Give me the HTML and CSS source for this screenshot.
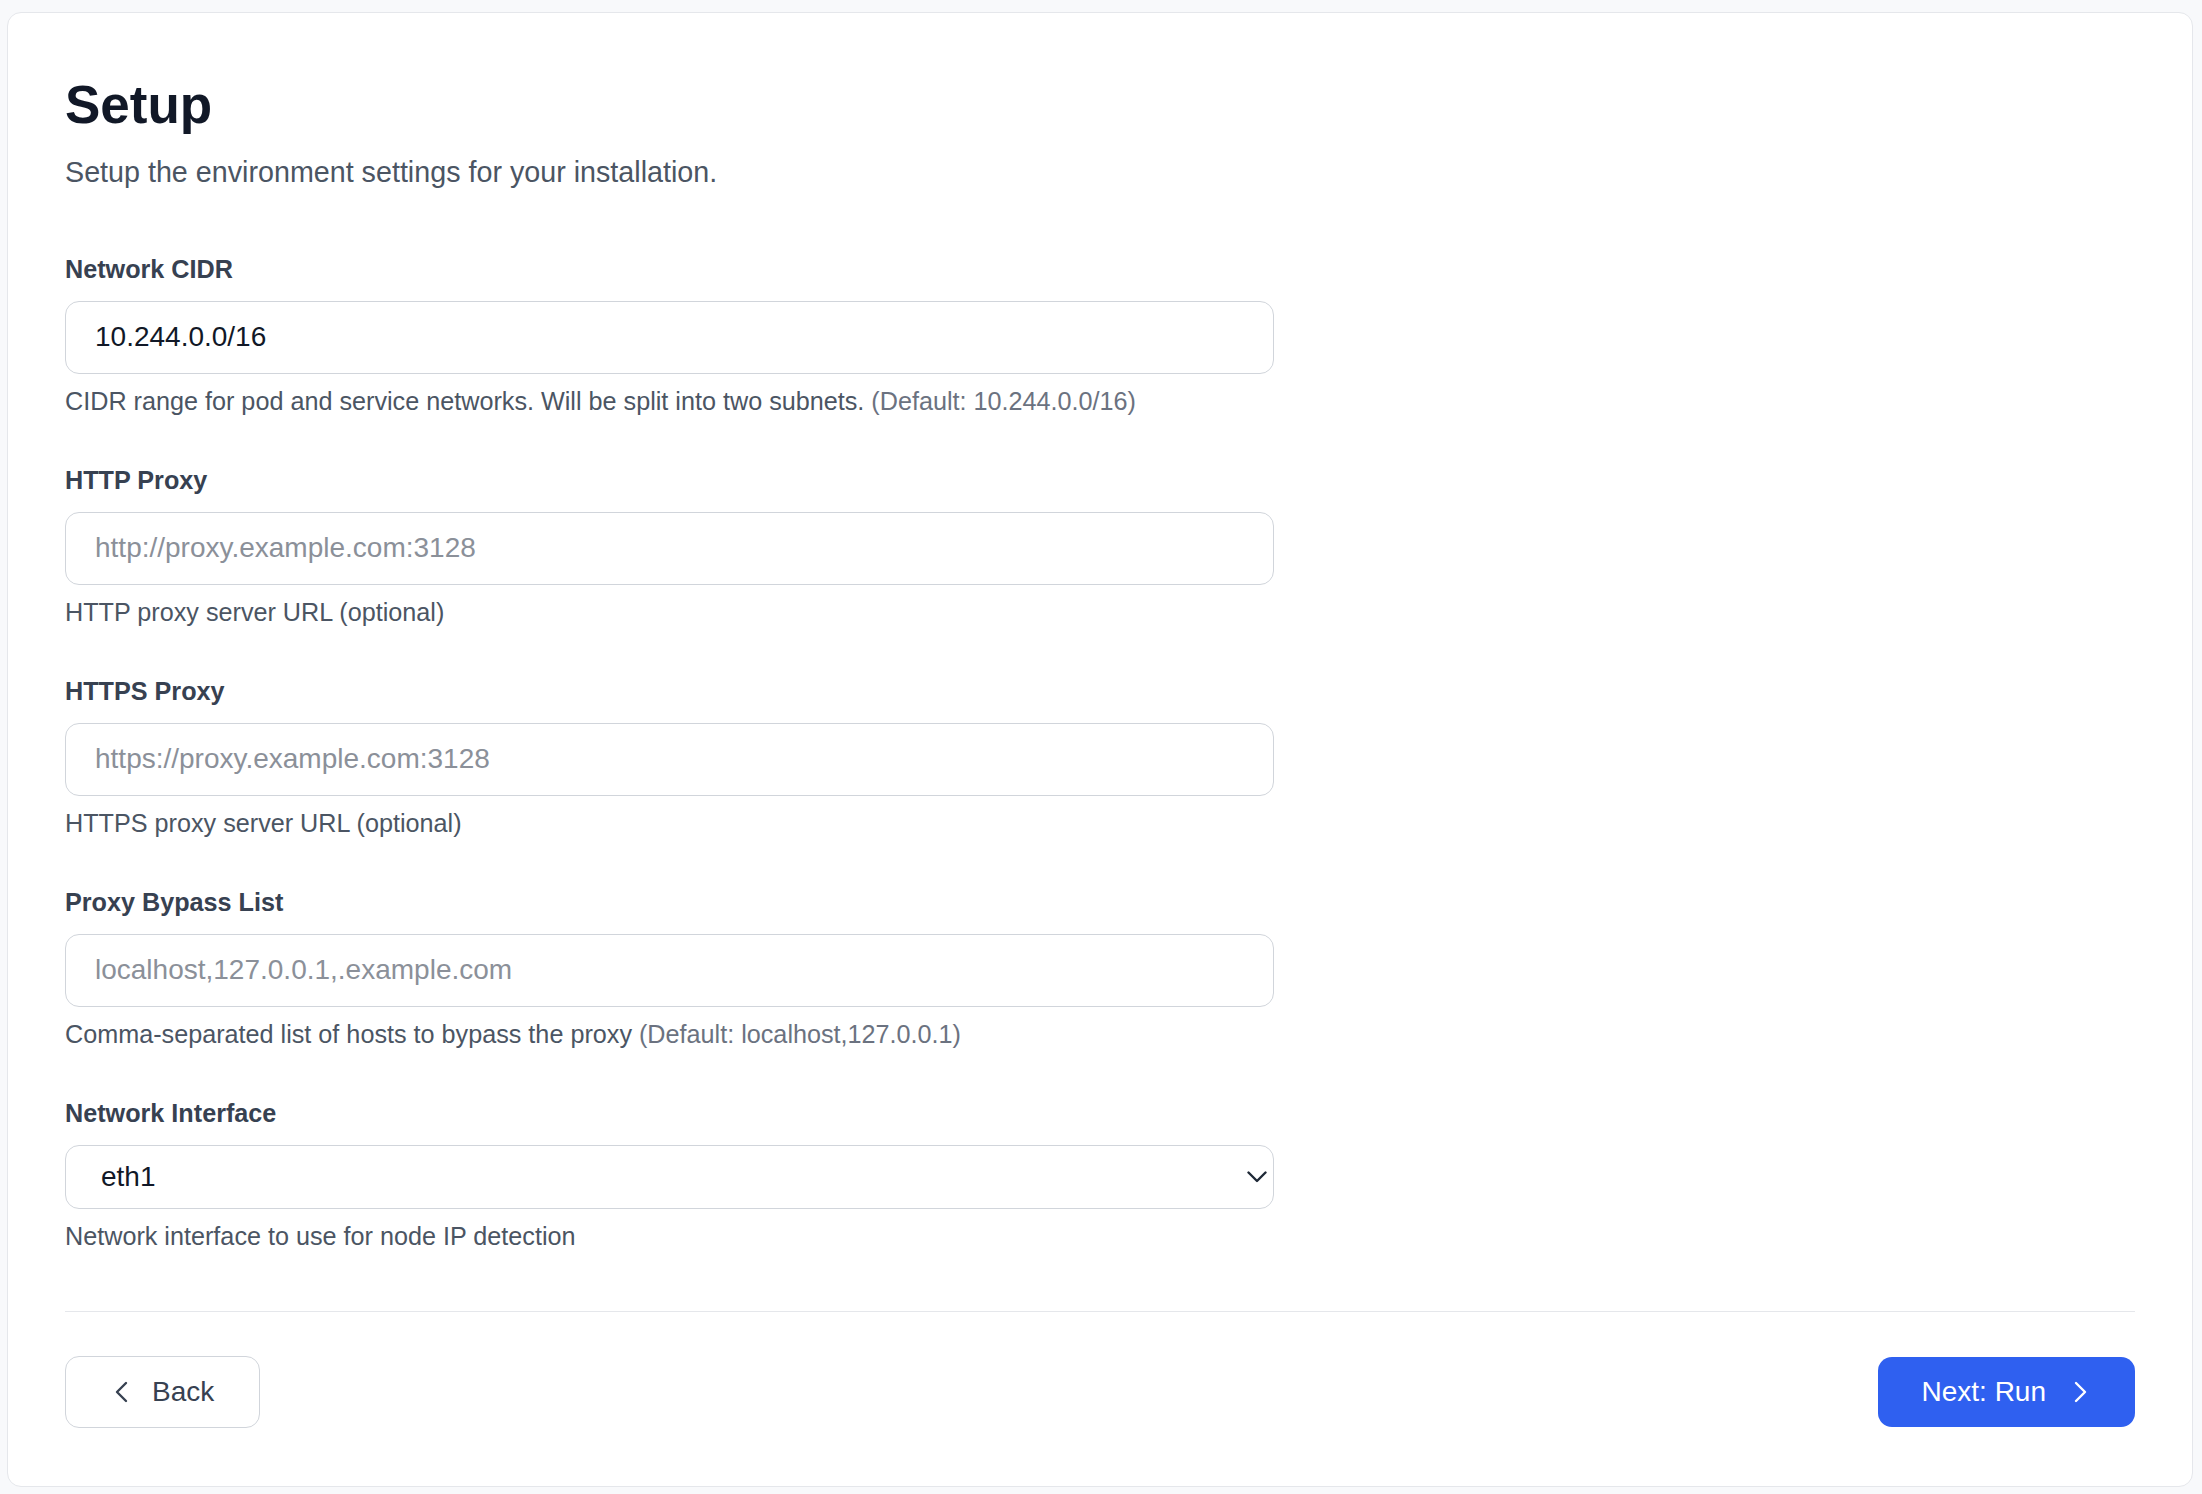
FILE: index.html
```html
<!DOCTYPE html>
<html lang="en">
<head>
<meta charset="utf-8">
<title>Setup</title>
<link rel="stylesheet" href="styles.css">
</head>
<body>
<main class="card">
  <h1 class="title">Setup</h1>
  <p class="subtitle">Setup the environment settings for your installation.</p>

  <form class="fields">
    <div class="field">
      <label class="label" for="cidr">Network CIDR</label>
      <input class="input" id="cidr" type="text" value="10.244.0.0/16">
      <p class="help">CIDR range for pod and service networks. Will be split into two subnets. <span class="muted">(Default: 10.244.0.0/16)</span></p>
    </div>

    <div class="field">
      <label class="label" for="http">HTTP Proxy</label>
      <input class="input" id="http" type="text" placeholder="http://proxy.example.com:3128">
      <p class="help">HTTP proxy server URL (optional)</p>
    </div>

    <div class="field">
      <label class="label" for="https">HTTPS Proxy</label>
      <input class="input" id="https" type="text" placeholder="https://proxy.example.com:3128">
      <p class="help">HTTPS proxy server URL (optional)</p>
    </div>

    <div class="field">
      <label class="label" for="bypass">Proxy Bypass List</label>
      <input class="input" id="bypass" type="text" placeholder="localhost,127.0.0.1,.example.com">
      <p class="help">Comma-separated list of hosts to bypass the proxy <span class="muted">(Default: localhost,127.0.0.1)</span></p>
    </div>

    <div class="field">
      <label class="label" for="iface">Network Interface</label>
      <div class="select-wrap">
        <select class="select" id="iface">
          <option>eth1</option>
        </select>
        <svg class="select-arrow" viewBox="0 0 20 12" width="20" height="12" aria-hidden="true">
          <polyline points="1.5,1.5 10,10 18.5,1.5" fill="none" stroke="#1f2937" stroke-width="2.4" stroke-linecap="round" stroke-linejoin="round"/>
        </svg>
      </div>
      <p class="help">Network interface to use for node IP detection</p>
    </div>
  </form>

  <div class="footer">
    <button class="btn btn-back" type="button">
      <svg class="btn-icon" viewBox="0 0 28 28" width="28" height="28" aria-hidden="true">
        <polyline points="18,5 9,14 18,23" fill="none" stroke="currentColor" stroke-width="2.4" stroke-linecap="round" stroke-linejoin="round"/>
      </svg>
      <span>Back</span>
    </button>
    <button class="btn btn-next" type="button">
      <span>Next: Run</span>
      <svg class="btn-icon" viewBox="0 0 28 28" width="28" height="28" aria-hidden="true">
        <polyline points="10,5 19,14 10,23" fill="none" stroke="currentColor" stroke-width="2.4" stroke-linecap="round" stroke-linejoin="round"/>
      </svg>
    </button>
  </div>
</main>
</body>
</html>
```

FILE: styles.css
```css
* {
  box-sizing: border-box;
}

html, body {
  margin: 0;
  background: #f8f9fb;
}

body {
  padding: 12px 9px 8px 7px;
  font-family: "Liberation Sans", Arial, Helvetica, sans-serif;
  color: #111827;
}

.card {
  background: #ffffff;
  border: 1.5px solid #e5e7eb;
  border-radius: 14px;
  padding: 60px 57px 58px 57px;
}

.title {
  margin: 0;
  font-size: 53px;
  line-height: 64px;
  font-weight: 700;
  color: #111827;
}

.subtitle {
  margin: 15px 0 0 0;
  font-size: 28.7px;
  line-height: 40px;
  color: #4b5563;
}

.fields {
  margin-top: 58.5px;
  display: flex;
  flex-direction: column;
  gap: 43px;
  width: 1209px;
}

.field {
  display: flex;
  flex-direction: column;
}

.label {
  font-size: 25.2px;
  line-height: 36px;
  font-weight: 700;
  color: #374151;
  margin-bottom: 14px;
}

.input {
  height: 73px;
  width: 100%;
  border: 1.5px solid #d1d5db;
  border-radius: 14px;
  padding: 0 29px;
  font-family: inherit;
  font-size: 28px;
  color: #111827;
  background: #ffffff;
  outline: none;
}

.input::placeholder {
  color: #8b9099;
  opacity: 1;
}

.select-wrap {
  position: relative;
}

.select {
  display: block;
  height: 64px;
  width: 100%;
  border: 1.5px solid #d1d5db;
  border-radius: 14px;
  padding: 0 40px 0 35px;
  font-family: inherit;
  font-size: 28px;
  color: #111827;
  background: #ffffff;
  appearance: none;
  -webkit-appearance: none;
  outline: none;
}

.select-arrow {
  position: absolute;
  right: 7px;
  top: 26px;
}

.help {
  margin: 9px 0 0 0;
  font-size: 25.2px;
  line-height: 36px;
  color: #4b5563;
}

.muted {
  color: #6b7280;
}

.footer {
  margin-top: 57px;
  border-top: 1.5px solid #e5e7eb;
  padding-top: 44px;
  display: flex;
  justify-content: space-between;
  align-items: center;
}

.btn {
  display: flex;
  align-items: center;
  gap: 16px;
  height: 72px;
  border-radius: 14px;
  font-family: inherit;
  font-size: 28px;
  cursor: pointer;
}

.btn-back {
  background: #ffffff;
  border: 1.5px solid #d1d5db;
  color: #374151;
  padding: 0 45px 0 42px;
}

.btn-next {
  background: #2f60f0;
  border: none;
  color: #ffffff;
  height: 70px;
  padding: 0 41px 0 44px;
  gap: 20px;
}

.btn-icon {
  flex: none;
}
```
